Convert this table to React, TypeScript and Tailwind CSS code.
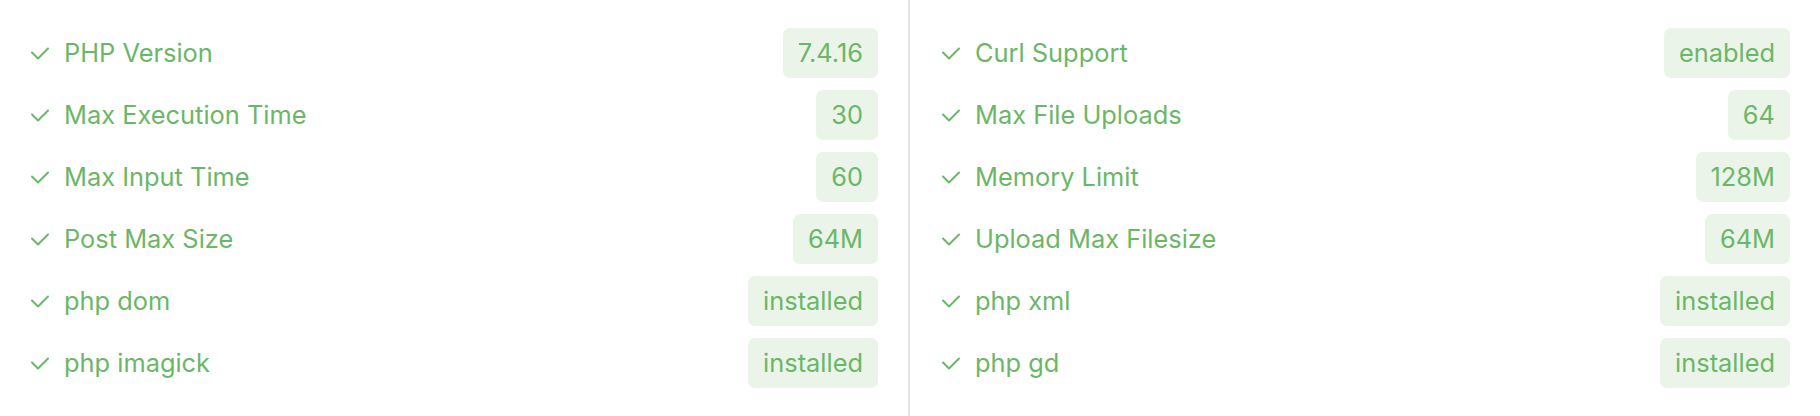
const left: [string, string][] = [
  ['PHP Version', '7.4.16'],
  ['Max Execution Time', '30'],
  ['Max Input Time', '60'],
  ['Post Max Size', '64M'],
  ['php dom', 'installed'],
  ['php imagick', 'installed'],
];

const right: [string, string][] = [
  ['Curl Support', 'enabled'],
  ['Max File Uploads', '64'],
  ['Memory Limit', '128M'],
  ['Upload Max Filesize', '64M'],
  ['php xml', 'installed'],
  ['php gd', 'installed'],
];

function Check() {
  return (
    <svg width="18" height="13" viewBox="0 0 18 13" fill="none" className="shrink-0">
      <path d="M1 5.5L7 11.5L17 1.5" stroke="currentColor" strokeWidth="2" strokeLinecap="round" strokeLinejoin="round" />
    </svg>
  );
}

function Column({ rows, className }: { rows: [string, string][]; className: string }) {
  return (
    <div className={`flex flex-col gap-[12px] py-[28px] ${className}`}>
      {rows.map(([label, value]) => (
        <div key={label} className="flex h-[50px] items-center justify-between">
          <div className="flex items-center gap-[15px]">
            <Check />
            <span>{label}</span>
          </div>
          <span className="flex h-[50px] items-center rounded-[7px] bg-[#eaf4e9] px-[15px]">{value}</span>
        </div>
      ))}
    </div>
  );
}

export default function App() {
  return (
    <div
      className="flex h-[416px] w-[1820px] bg-white text-[25.4px] leading-none text-[#6cb667]"
      style={{ fontFamily: 'Inter, "Noto Sans", sans-serif' }}
    >
      <Column rows={left} className="w-[908px] pl-[31px] pr-[30px]" />
      <div className="w-[2px] bg-[#e2e2e2]" />
      <Column rows={right} className="flex-1 pl-[32px] pr-[30px]" />
    </div>
  );
}
